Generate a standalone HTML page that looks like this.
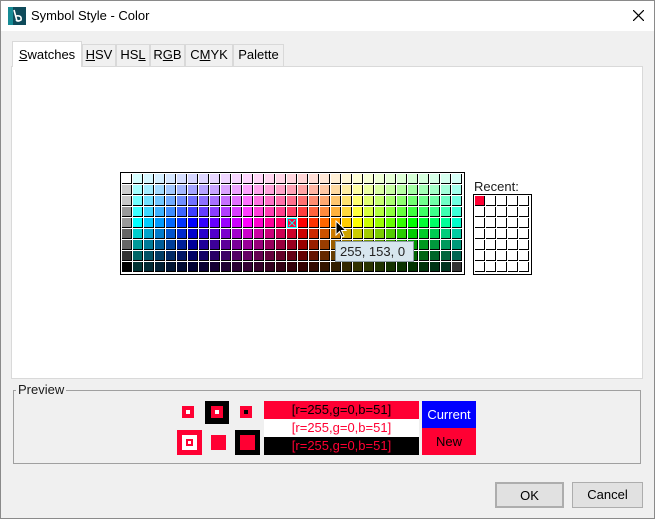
<!DOCTYPE html>
<html><head><meta charset="utf-8"><style>
*{box-sizing:border-box;margin:0;padding:0}
body{width:655px;height:519px;background:#f0f0f0;font-family:"Liberation Sans",sans-serif;font-size:13px;color:#000;position:relative;overflow:hidden}
.abs{position:absolute}
#win{left:0;top:0;width:655px;height:519px;border:1px solid #8a8a8a}
#title{left:1px;top:1px;width:653px;height:30px;background:#fff}
.tab{position:absolute;top:44px;height:22px;border:1px solid #d9d9d9;border-bottom:none;background:#f0f0f0;font-size:13px;line-height:20px;text-align:center}
#content{left:11px;top:66px;width:632px;height:313px;background:#fff;border:1px solid #d9d9d9}
.grid{position:absolute;border:1px solid #000;background:#fff;padding:1px}
.c{position:absolute;width:10px;height:10px;border-right:1px solid #000;border-bottom:1px solid #000}
.btn{position:absolute;top:482px;height:26px;border:1px solid #adadad;background:#e1e1e1;text-align:center;line-height:24px;font-size:13px}
</style></head><body>
<div id="win" class="abs"></div>
<div id="title" class="abs"></div>
<svg class="abs" style="left:8px;top:7px" width="18" height="18" viewBox="0 0 18 18"><rect width="18" height="18" fill="#0e4a5a"/><rect x="0" y="0" width="5" height="18" fill="#168b95"/><path d="M6 3 L9 14 M8 9 Q14 8 13 13 Q10 15 8 13" stroke="#fff" stroke-width="1.6" fill="none"/></svg>
<div class="abs" style="left:31px;top:8px;font-size:13px">Symbol Style - Color</div>
<svg class="abs" style="left:633px;top:10px" width="11" height="11"><path d="M0 0L11 11M11 0L0 11" stroke="#000" stroke-width="1.2"/></svg>

<div id="content" class="abs"></div>
<div class="tab" style="left:12px;top:41px;height:26px;width:70px;background:#fff;line-height:26px;z-index:2"><u>S</u>watches</div>
<div class="tab" style="left:82px;width:34px"><u>H</u>SV</div>
<div class="tab" style="left:116px;width:34px">HS<u>L</u></div>
<div class="tab" style="left:150px;width:35px">R<u>G</u>B</div>
<div class="tab" style="left:185px;width:48px">C<u>M</u>YK</div>
<div class="tab" style="left:233px;width:51px">Palette</div>

<div id="sw" class="grid" style="left:120px;top:172px;width:345px;height:103px"></div>
<div class="abs" style="left:474px;top:179px;font-size:13px;color:#1a1a1a">Recent:</div>
<div id="rc" class="grid" style="left:473px;top:194px;width:59px;height:81px"></div>

<div class="abs" style="left:335px;top:241px;width:79px;height:21px;background:#d7e6ee;border:1px solid #8c9ca4;font-size:13px;line-height:19px;padding-left:4px;color:#222">255, 153, 0</div>
<svg class="abs" style="left:335px;top:220px" width="12" height="19"><path d="M1 1L1 15L4.5 11.5L7 17L9 16L6.5 10.5L11 10.5Z" fill="#000" stroke="#fff" stroke-width="1"/></svg>

<div class="abs" style="left:13px;top:390px;width:628px;height:74px;border:1px solid #a0a0a0"></div>
<div class="abs" style="left:16px;top:382px;padding:0 2px;background:#f0f0f0;font-size:13px;color:#1a1a1a">Preview</div>

<div class="abs" style="left:182px;top:406px;width:12px;height:12px;background:#ff0033"></div>
<div class="abs" style="left:186px;top:410px;width:4px;height:4px;background:#fff"></div>
<div class="abs" style="left:205px;top:401px;width:24px;height:23px;background:#000"></div>
<div class="abs" style="left:211px;top:406px;width:12px;height:12px;background:#ff0033"></div>
<div class="abs" style="left:215px;top:410px;width:4px;height:4px;background:#fff"></div>
<div class="abs" style="left:240px;top:406px;width:12px;height:12px;background:#ff0033"></div>
<div class="abs" style="left:244px;top:410px;width:4px;height:4px;background:#000"></div>
<div class="abs" style="left:177px;top:430px;width:25px;height:25px;background:#ff0033"></div>
<div class="abs" style="left:182px;top:435px;width:15px;height:15px;background:#fff"></div>
<div class="abs" style="left:186px;top:439px;width:7px;height:7px;background:#ff0033"></div>
<div class="abs" style="left:188px;top:441px;width:3px;height:3px;background:#fff"></div>
<div class="abs" style="left:211px;top:435px;width:15px;height:15px;background:#ff0033"></div>
<div class="abs" style="left:235px;top:430px;width:25px;height:25px;background:#000"></div>
<div class="abs" style="left:240px;top:435px;width:15px;height:15px;background:#ff0033"></div>

<div class="abs" style="left:264px;top:401px;width:155px;height:18px;background:#ff0033;color:#000;text-align:center;line-height:18px">[r=255,g=0,b=51]</div>
<div class="abs" style="left:264px;top:419px;width:155px;height:18px;background:#fff;color:#ff0033;text-align:center;line-height:18px">[r=255,g=0,b=51]</div>
<div class="abs" style="left:264px;top:437px;width:155px;height:18px;background:#000;color:#ff0033;text-align:center;line-height:18px">[r=255,g=0,b=51]</div>
<div class="abs" style="left:422px;top:401px;width:54px;height:27px;background:#0000ff;color:#fff;text-align:center;line-height:27px">Current</div>
<div class="abs" style="left:422px;top:428px;width:54px;height:27px;background:#ff0033;color:#000;text-align:center;line-height:27px">New</div>

<div class="btn" style="left:495px;width:69px;border:2px solid #adadad">OK</div>
<div class="btn" style="left:572px;width:71px">Cancel</div>

<script>
function hsl(h,s,l){return "hsl("+h+","+s+"%,"+l+"%)";}
var sw=document.getElementById("sw"),L=[92,82,72,62,50,40,30,20,10];
for(var r=0;r<9;r++)for(var c=0;c<31;c++){
 var d=document.createElement("div");d.className="c";
 d.style.left=(1+c*11)+"px";d.style.top=(1+r*11)+"px";
 var col;
 if(c==0){var g=[100,80,78,60,60,40,40,20,0][r];col=hsl(0,0,g);}
 else if(c==30&&r==8){col="#333";}
 else{var h=(180+(c-1)*12)%360;col=hsl(h,100,L[r]);}
 d.style.background=col;
 if(c==15&&r==4){d.style.background="#ff0033";d.style.border="1px solid #00ffff";d.innerHTML='<svg width="8" height="8" style="display:block"><path d="M1 1L7 7M7 1L1 7" stroke="#00ffff"/></svg>';}
 sw.appendChild(d);}
var rc=document.getElementById("rc");
for(var r=0;r<7;r++)for(var c=0;c<5;c++){
 var d=document.createElement("div");d.className="c";
 d.style.left=(1+c*11)+"px";d.style.top=(1+r*11)+"px";
 d.style.background=(r==0&&c==0)?"#ff0033":"#fff";rc.appendChild(d);}
</script>
</body></html>
